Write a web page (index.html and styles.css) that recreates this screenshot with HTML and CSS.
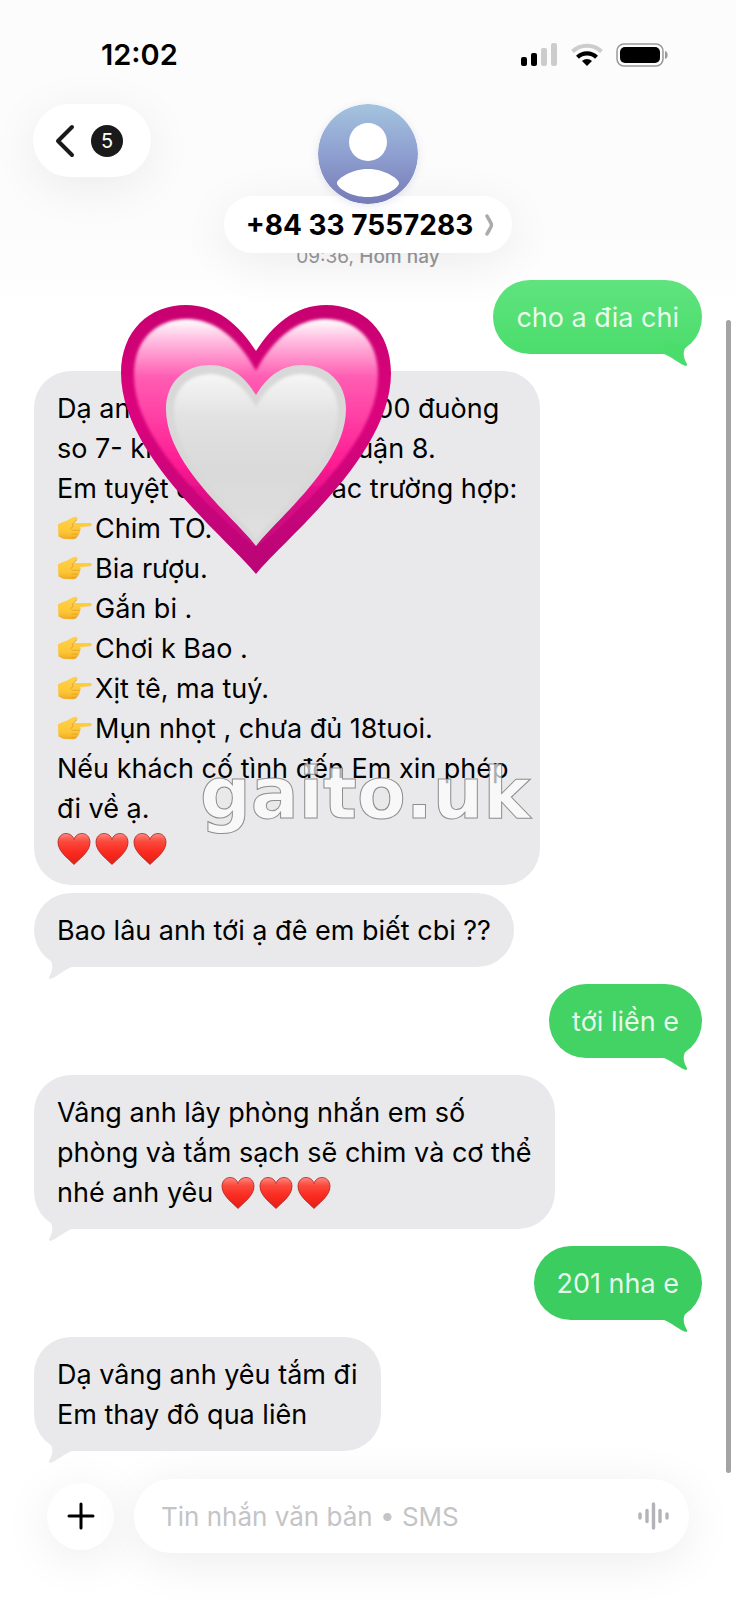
FILE: index.html
```
<!DOCTYPE html>
<html lang="vi">
<head>
<meta charset="utf-8">
<meta name="viewport" content="width=device-width, initial-scale=1">
<title>+84 33 7557283</title>
<link rel="stylesheet" href="styles.css">
</head>
<body>
<svg class="sprites" aria-hidden="true">
  <defs>
    <linearGradient id="red" x1="0" y1="0" x2="0" y2="1">
      <stop offset="0" stop-color="#ff8a80"/><stop offset=".25" stop-color="#fb4a3e"/><stop offset=".6" stop-color="#fb2a20"/><stop offset="1" stop-color="#e02018"/>
    </linearGradient>
    <linearGradient id="skin" x1="0" y1="0" x2="0" y2="1">
      <stop offset="0" stop-color="#ffd24d"/><stop offset=".7" stop-color="#fdc534"/><stop offset="1" stop-color="#efa826"/>
    </linearGradient>
    <symbol id="love" viewBox="0 0 34 34">
      <path d="M17 32.500C13 28 1 20 1 10.500C1 5 4.500 1.500 9 1.500C13 1.500 16 4 17 7.500C18 4 21 1.500 25 1.500C29.500 1.500 33 5 33 10.500C33 20 21 28 17 32.500Z" fill="url(#red)" stroke="#a8251e" stroke-width=".8"/>
    </symbol>
    <symbol id="point" viewBox="0 0 36 24">
      <path d="M1 9.500C1 8 2 7.500 3.500 7L10 4.500C12 3.500 15 1.500 17.500.8C19.800.2 21.500 2 20 3.600L16.500 7L33 7C35.500 7 35.500 10 33 10.200L23 11C24 12 24 13.500 23 14.500C23.500 16 23 17.300 21.500 18C22 19.500 21 21 19.500 21.300C19.300 22.500 18 23.200 16.500 23.200L9 23C5 23 3 21 1.500 20.500Z" fill="url(#skin)"/>
      <path d="M15 14.300H22.500M15 18H21.500M15 21.300H19.500" fill="none" stroke="#e5a02a" stroke-width=".8" stroke-linecap="round"/>
      <path d="M20 3.600L15.500 8C16.500 9.500 15.500 12 13.500 12.500" fill="none" stroke="#e5a02a" stroke-width="1"/>
    </symbol>
    <symbol id="tail" viewBox="0 0 30 26">
      <path d="M5 4C9 9 9.500 15 5.500 22C4.200 24.400 5 25.300 7.500 24.600C14 22 20 16 28 13L28 2Z" fill="currentColor"/>
    </symbol>
  </defs>
</svg>

<div class="screen">
  <header class="top">
    <div class="status">
      <time class="clock">12:02</time>
      <div class="indicators">
        <svg width="37" height="24" viewBox="0 0 37 24" aria-label="Signal">
          <rect x="0" y="14" width="6" height="9" rx="2"/><rect x="10" y="10" width="6" height="13" rx="2"/>
          <rect x="20" y="5" width="6" height="18" rx="2" fill="#ccc"/><rect x="30" y="0" width="6" height="23" rx="2" fill="#ccc"/>
        </svg>
        <svg width="32" height="24" viewBox="0 0 32 24" aria-label="Wi-Fi">
          <path d="M1.500 8.500A21 21 0 0 1 30.500 8.500" fill="none" stroke="#ccc" stroke-width="4"/>
          <path d="M6.500 14.200A13.500 13.500 0 0 1 25.500 14.200" fill="none" stroke="#000" stroke-width="4.200"/>
          <path d="M16 23L11 18A7.200 7.200 0 0 1 21 18Z"/>
        </svg>
        <svg width="53" height="24" viewBox="0 0 53 24" aria-label="Battery">
          <rect x="1" y="1" width="46" height="22" rx="7" fill="none" stroke="#999" stroke-width="1.500"/>
          <rect x="4" y="4" width="40" height="16" rx="5"/><path d="M49 8C52.500 8.500 52.500 15.500 49 16Z" fill="#999"/>
        </svg>
      </div>
    </div>
    <nav class="bar">
      <button class="back" aria-label="Quay lại">
        <svg width="20" height="34" viewBox="0 0 20 34" aria-hidden="true"><path d="M17 3L3 17L17 31" fill="none" stroke="#1a1a1a" stroke-width="4" stroke-linecap="round" stroke-linejoin="round"/></svg>
        <span class="count">5</span>
      </button>
      <div class="contact">
        <svg class="avatar" viewBox="0 0 100 100" aria-hidden="true">
          <defs><linearGradient id="sky" x1="0" y1="0" x2="0" y2="1"><stop offset="0" stop-color="#a4c4de"/><stop offset=".5" stop-color="#8f9fd0"/><stop offset="1" stop-color="#757bb6"/></linearGradient></defs>
          <circle cx="50" cy="50" r="50" fill="url(#sky)"/>
          <circle cx="50" cy="38" r="19" fill="#fff"/>
          <path d="M19 79.500C18 76 32 65 50 65S82 76 81 79.500C80 84 68 93 50 93S20 84 19 79.500Z" fill="#fff"/>
        </svg>
        <button class="name">+84 33 7557283
          <svg width="9" height="22" viewBox="0 0 9 22" aria-hidden="true"><path d="M2 2C4 6 6.500 9 6.500 11S4 16 2 20" fill="none" stroke="#aaa" stroke-width="3.500" stroke-linecap="round" stroke-linejoin="round"/></svg>
        </button>
      </div>
    </nav>
  </header>

  <main class="thread">
    <p class="stamp">09:36, <b>Hôm nay</b></p>
    <p class="bubble sent light">cho a đia chi<svg class="tail"><use href="#tail"/></svg></p>
    <p class="bubble">Dạ an<span class="gap wide"></span>00 đuòng<br>so 7- kh<span class="gap mid"></span>uận 8.<br>Em tuyệt đ<span class="gap"></span>ác trường hợp:<br><svg class="emoji hand"><use href="#point"/></svg>Chim TO.<br><svg class="emoji hand"><use href="#point"/></svg>Bia rượu.<br><svg class="emoji hand"><use href="#point"/></svg>Gắn bi .<br><svg class="emoji hand"><use href="#point"/></svg>Chơi k Bao .<br><svg class="emoji hand"><use href="#point"/></svg>Xịt tê, ma tuý.<br><svg class="emoji hand"><use href="#point"/></svg>Mụn nhọt , chưa đủ 18tuoi.<br>Nếu khách cố tình đến Em xin phép<br>đi về ạ.<br><svg class="emoji"><use href="#love"/></svg><svg class="emoji"><use href="#love"/></svg><svg class="emoji"><use href="#love"/></svg></p>
    <p class="bubble follow">Bao lâu anh tới ạ đê em biết cbi ??<svg class="tail"><use href="#tail"/></svg></p>
    <p class="bubble sent">tới liền e<svg class="tail"><use href="#tail"/></svg></p>
    <p class="bubble">Vâng anh lây phòng nhắn em số<br>phòng và tắm sạch sẽ chim và cơ thể<br>nhé anh yêu <svg class="emoji"><use href="#love"/></svg><svg class="emoji"><use href="#love"/></svg><svg class="emoji"><use href="#love"/></svg><svg class="tail"><use href="#tail"/></svg></p>
    <p class="bubble sent deep">201 nha e<svg class="tail"><use href="#tail"/></svg></p>
    <p class="bubble">Dạ vâng anh yêu tắm đi<br>Em thay đô qua liên<svg class="tail"><use href="#tail"/></svg></p>

    <svg class="sticker" viewBox="0 0 270 270" aria-hidden="true">
      <defs>
        <linearGradient id="rim" x1="0" y1="0" x2="0" y2="1"><stop offset="0" stop-color="#c80070"/><stop offset=".4" stop-color="#dc047d"/><stop offset="1" stop-color="#b90577"/></linearGradient>
        <linearGradient id="pink" x1="0" y1="0" x2="0" y2="1"><stop offset="0" stop-color="#fff"/><stop offset=".08" stop-color="#ffc4e4"/><stop offset=".25" stop-color="#ff5cb2"/><stop offset=".42" stop-color="#ff3fa4"/><stop offset=".62" stop-color="#ff1c93"/><stop offset=".8" stop-color="#d80884"/><stop offset="1" stop-color="#bd0679"/></linearGradient>
        <linearGradient id="pearl" x1="0" y1="0" x2="0" y2="1"><stop offset="0" stop-color="#f6f6f6"/><stop offset=".25" stop-color="#e2e2e2"/><stop offset=".6" stop-color="#d9d9d9"/><stop offset="1" stop-color="#e0e0e0"/></linearGradient>
        <filter id="soft" x="-5%" y="-5%" width="110%" height="110%"><feGaussianBlur stdDeviation="1.500"/></filter>
      </defs>
      <path d="M135 269C104 231 0 150 0 68C0 26 28 0 65 0C96 0 118 20 135 46C152 20 174 0 205 0C242 0 270 26 270 68C270 150 166 231 135 269Z" fill="url(#rim)"/>
      <path d="M135 247C104 213 13 142 13 70C13 34 36 14 66 14C94 14 118 34 135 66C152 34 176 14 204 14C234 14 257 34 257 70C257 142 166 213 135 247Z" fill="url(#pink)" filter="url(#soft)"/>
      <path d="M135 241C114 213 45 160 45 104C45 77 64 60 89 60C110 60 124 72 135 90C146 72 160 60 181 60C206 60 225 77 225 104C225 160 156 213 135 241Z" fill="#d8d8d9"/>
      <path d="M135 234C114 206 53 156 53 106C53 83 68 69 90 69C109 69 125 83 135 102C145 83 161 69 180 69C202 69 217 83 217 106C217 156 156 206 135 234Z" fill="url(#pearl)" filter="url(#soft)"/>
    </svg>
    <span class="watermark">gaito.uk</span>
  </main>

  <form class="composer">
    <button class="add" type="button" aria-label="Thêm"><svg width="28" height="28" viewBox="0 0 28 28" aria-hidden="true"><path d="M14 2V26M2 14H26" stroke="#000" stroke-width="3" stroke-linecap="round"/></svg></button>
    <div class="field">
      <input type="text" aria-label="Tin nhắn văn bản" placeholder="Tin nhắn văn bản • SMS">
      <button class="voice" type="button" aria-label="Ghi âm"><svg width="32" height="28" viewBox="0 0 32 28" aria-hidden="true"><path d="M2 12V16M9 8.500V19.500M15.500 2V26M22 8.500V19.500M29 12V16" stroke="#b4b4b8" stroke-width="3.400" stroke-linecap="round"/></svg></button>
    </div>
  </form>
  <div class="scrollbar"></div>
</div>
</body>
</html>
```
FILE: styles.css
```
* { box-sizing: border-box; }
body { margin: 0; background: #fff; color: #000; font-family: Inter, "Noto Sans", sans-serif; }
button, input { font: inherit; color: inherit; border: 0; padding: 0; background: none; }
p { margin: 0; }
.sprites { position: absolute; width: 0; height: 0; }
.screen { position: relative; min-height: 100vh; display: flex; flex-direction: column; overflow: hidden; background: linear-gradient(#fcfcfc 0, #fcfcfc 240px, #fff 310px); }

.top { position: relative; z-index: 2; }
.status { height: 104px; padding: 5px 67px 0 101px; display: flex; align-items: center; justify-content: space-between; }
.clock { font-size: 29px; font-weight: 600; line-height: 32px; }
.indicators { display: flex; gap: 13px; }
.indicators svg { display: block; }
.bar { display: grid; grid-template-columns: 1fr auto 1fr; align-items: start; padding: 0 33px; }
.back { justify-self: start; height: 73px; padding: 0 28px 0 22px; border-radius: 37px; background: #fff; display: flex; align-items: center; gap: 16px; box-shadow: 0 10px 50px rgba(0,0,0,.07); }
.count { width: 32px; height: 32px; border-radius: 50%; background: #1a1a1a; color: #fff; font-size: 20px; line-height: 32px; text-align: center; }
.contact { display: flex; flex-direction: column; align-items: center; }
.avatar { position: relative; z-index: 1; width: 100px; height: 100px; border-radius: 50%; box-shadow: 0 2px 8px rgba(90,100,170,.15); }
.name { margin-top: -8px; height: 57px; padding: 0 18px 0 22px; border-radius: 29px; background: #fff; display: flex; align-items: center; gap: 12px; font-size: 28px; font-weight: 700; box-shadow: 0 10px 50px rgba(0,0,0,.07); }

.thread { position: relative; flex: 1; display: flex; flex-direction: column; align-items: flex-start; gap: 17px; padding: 0 34px; }
.stamp { align-self: center; margin: -8px 0 -6px; font-size: 19px; line-height: 24px; color: #97979b; }
.stamp b { font-weight: 500; }
.bubble { position: relative; padding: 18px 23px 16px; border-radius: 37px; background: #e9e9eb; color: #000; font-size: 27px; line-height: 40px; white-space: nowrap; }
.follow { margin-top: -9px; }
.sent { align-self: flex-end; background: #42d364; --tone: #42d364; color: rgba(255,255,255,.88); }
.light { background: linear-gradient(#5fe37e, #4bdd6c); --tone: #4bdd6c; }
.deep { background: #3bcd5f; --tone: #3bcd5f; }
.tail { position: absolute; left: 10px; bottom: -13px; width: 30px; height: 26px; color: #e9e9eb; }
.sent .tail { left: auto; right: 10px; color: var(--tone); transform: scaleX(-1); }
.emoji { width: 34px; height: 34px; margin-right: 4px; vertical-align: -8px; }
.hand { width: 36px; height: 24px; margin-right: 2px; vertical-align: -2px; }
.gap { display: inline-block; width: 139px; }
.mid { width: 196px; }
.wide { width: 246px; }

.sticker { position: absolute; left: 121px; top: 52px; width: 270px; height: 270px; }
.watermark { position: absolute; left: 200px; top: 499px; font: bold 71px/84px "DejaVu Sans", sans-serif; color: rgba(255,255,255,.68); -webkit-text-stroke: 1px rgba(100,100,100,.7); }

.composer { position: relative; display: flex; align-items: center; gap: 20px; padding: 0 47px 47px; }
.add { width: 67px; height: 67px; flex: none; border-radius: 50%; background: #fff; display: grid; place-items: center; box-shadow: 0 8px 50px rgba(0,0,0,.08); }
.field { flex: 1; height: 74px; padding: 0 19px 0 27px; border-radius: 37px; background: #fff; display: flex; align-items: center; box-shadow: 0 8px 50px rgba(0,0,0,.08); }
.field input { flex: 1; min-width: 0; height: 40px; font-size: 26px; outline: 0; }
.field input::placeholder { color: #c4c4c6; opacity: 1; }
.voice { display: flex; }
.scrollbar { position: absolute; right: 5px; top: 320px; bottom: 127px; width: 5px; border-radius: 3px; background: #a4a4a4; }
```
